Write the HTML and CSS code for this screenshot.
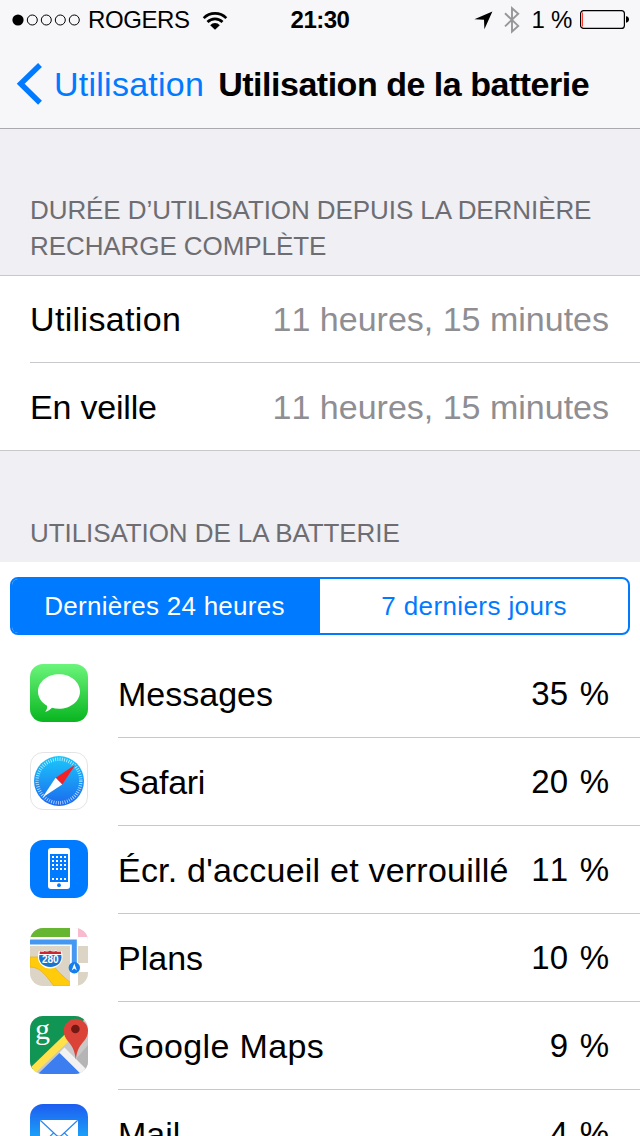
FILE: index.html
```
<!DOCTYPE html>
<html lang="fr">
<head>
    <meta charset="utf-8">
    <meta name="viewport" content="width=device-width, initial-scale=1">
    <title>Utilisation de la batterie</title>
    <link rel="stylesheet" href="styles.css">
</head>
<body>
    <header class="topbar">
        <div class="status-bar">
            <div class="status-left">
                <svg class="signal" width="68" height="12" viewBox="0 0 68 12">
                    <circle cx="6" cy="6" r="5.6"/>
                    <g fill="none" stroke="#000" stroke-width="1">
                        <circle cx="20.3" cy="6" r="5"/>
                        <circle cx="34.3" cy="6" r="5"/>
                        <circle cx="48.3" cy="6" r="5"/>
                        <circle cx="62.3" cy="6" r="5"/>
                    </g>
                </svg>
                <span class="carrier">ROGERS</span>
                <svg class="wifi" width="26" height="19" viewBox="0 0 26 19">
                    <g fill="none" stroke="#000" stroke-width="2.7">
                        <path d="M1.7 7.1a16 16 0 0 1 22.6 0"/>
                        <path d="M5.5 11a10.6 10.6 0 0 1 15 0"/>
                    </g>
                    <path d="M8.2 14.200a6.500 6.500 0 0 1 9.600 0L13 18.800z"/>
                </svg>
            </div>
            <span class="clock">21:30</span>
            <div class="status-right">
                <svg class="location" width="19" height="19" viewBox="0 0 19 19">
                    <path d="M18.4.4L10.4 18.2 10 8.8.4 8.3z"/>
                </svg>
                <svg class="bluetooth" width="16" height="28" viewBox="0 0 16 28">
                    <path d="M1 7.3l13.2 12.6L8 25.6V2.2l6.2 5.6L1 20.4" fill="none" stroke="#97979a" stroke-width="1.9"/>
                </svg>
                <span class="percent">1 %</span>
                <svg class="battery" width="50" height="20" viewBox="0 0 50 20">
                    <rect x=".6" y=".6" width="43.8" height="17.8" rx="3" fill="none" stroke="#000" stroke-width="1.2"/>
                    <path d="M2 2.5h1v14H2z" fill="#ff3b30"/>
                    <path d="M46 6.3c4 .4 4 6 0 6.4z"/>
                </svg>
            </div>
        </div>
        <nav class="nav">
            <svg class="chevron" width="26" height="42" viewBox="0 0 26 42">
                <path d="M24 2L4.700 20.800 24 39.700" fill="none" stroke="#007aff" stroke-width="5.5"/>
            </svg>
            <a class="back">Utilisation</a>
            <h1>Utilisation de la batterie</h1>
        </nav>
    </header>

    <main>
        <h2 class="group-title">DURÉE D’UTILISATION DEPUIS LA DERNIÈRE<br>RECHARGE COMPLÈTE</h2>
        <div class="group">
            <div class="stat">
                <span class="stat-name">Utilisation</span>
                <span class="value">11 heures, 15 minutes</span>
            </div>
            <div class="stat">
                <span class="stat-name standby">En veille</span>
                <span class="value">11 heures, 15 minutes</span>
            </div>
        </div>

        <h2 class="group-title battery-title">UTILISATION DE LA BATTERIE</h2>
        <div class="usage">
            <div class="segmented">
                <div class="segment active">Dernières 24 heures</div>
                <div class="segment">7 derniers jours</div>
            </div>

            <div class="app">
                <svg class="icon" viewBox="0 0 58 58">
                    <defs>
                        <linearGradient id="green" x1="0" y1="0" x2="0" y2="1">
                            <stop offset="0" stop-color="#6bf57b"/>
                            <stop offset="1" stop-color="#08b51f"/>
                        </linearGradient>
                    </defs>
                    <rect width="58" height="58" rx="13" fill="url(#green)"/>
                    <path d="M29 10.2c11.700 0 21 7.800 21 17.300S40.700 44.800 29 44.800c-2.500 0-4.900-.4-7.100-1-1.700 1.900-3.900 3.600-6.800 3.900 1.600-1.700 2.300-3.700 2-6C11.500 38.600 8 33.400 8 27.500 8 18 17.300 10.200 29 10.200z" fill="#fff"/>
                </svg>
                <div class="app-row">
                    <span class="app-name">Messages</span>
                    <span class="app-percent">35 %</span>
                </div>
            </div>

            <div class="app">
                <svg class="icon" viewBox="0 0 58 58">
                    <defs>
                        <linearGradient id="compass" x1="0" y1="0" x2="0" y2="1">
                            <stop offset="0" stop-color="#1bc8fb"/>
                            <stop offset="1" stop-color="#1c68ee"/>
                        </linearGradient>
                    </defs>
                    <rect x=".5" y=".5" width="57" height="57" rx="12.5" fill="#fff" stroke="#e4e4e4"/>
                    <circle cx="29" cy="29" r="25" fill="url(#compass)"/>
                    <circle cx="29" cy="29" r="21.8" fill="none" stroke="#fff" stroke-opacity=".75" stroke-width="3.4" stroke-dasharray=".8 1.483"/>
                    <path d="M45.5 12.5L25.600 25.800l6.600 6.600z" fill="#f52026"/>
                    <path d="M12.5 45.5l13.100-19.700 6.600 6.600z" fill="#fff"/>
                </svg>
                <div class="app-row">
                    <span class="app-name safari">Safari</span>
                    <span class="app-percent">20 %</span>
                </div>
            </div>

            <div class="app">
                <svg class="icon" viewBox="0 0 58 58">
                    <rect width="58" height="58" rx="13" fill="#007aff"/>
                    <rect x="18" y="8" width="22" height="41" rx="3" fill="#fff"/>
                    <rect x="20" y="14" width="18" height="28" fill="#007aff"/>
                    <path d="M22 17h14M22 21h14M22 25h14M22 29h14M22 39h14" stroke="#fff" stroke-width="2" stroke-dasharray="2"/>
                    <circle cx="29" cy="45.2" r="1.9" fill="#007aff"/>
                </svg>
                <div class="app-row">
                    <span class="app-name home">Écr. d'accueil et verrouillé</span>
                    <span class="app-percent">11 %</span>
                </div>
            </div>

            <div class="app">
                <svg class="icon" viewBox="0 0 58 58">
                    <defs>
                        <clipPath id="tile"><rect width="58" height="58" rx="13"/></clipPath>
                    </defs>
                    <g clip-path="url(#tile)">
                        <path d="M0 0h58v58H0z" fill="#dcd5c6"/>
                        <path d="M0 0h40v9H0z" fill="#66b631"/>
                        <path d="M48 0h10v9H48z" fill="#f9b9cf"/>
                        <path d="M0 9h58v9H0zM40 35h18v9H40z" fill="#fff"/>
                        <path d="M0 29h8c12 0 17 13 25 19 4 4 8 7 12 10H24C18 51 12 39 0 39z" fill="#ffcb0b" stroke="#eeb018" stroke-width=".8"/>
                        <path d="M40 0h8v58h-8z" fill="#fff"/>
                        <path d="M0 14h44.300v24" fill="none" stroke="#4598f2" stroke-width="5"/>
                        <circle cx="44.3" cy="39.7" r="5.7" fill="#157dec"/>
                        <path d="M44.3 35.5l2.600 7-2.600-2-2.600 2z" fill="#fff"/>
                        <path d="M9 23c2 1 4 .5 5.500-.7 2 1 4 1 5.500-.3 2 1.300 4 1.300 6 .2 1.500 1.300 3.500 1.800 5.500.8 1 2 1 4 1 6.500 0 6-6 11-12.500 11S8 35.500 8 29.500C8 27 8 25 9 23z" fill="#fff"/>
                        <path d="M10 23.5c2 .7 3.500.2 4.700-.6 2 1 3.800.8 5.300-.3 2 1.200 4 1 6 .3 1.500.8 3 1.300 4.700.6l.5 2.500H9.500z" fill="#ce2533"/>
                        <path d="M9.300 27h22c1.500 7-4 12-11 12s-12.500-5-11-12z" fill="#1973d1"/>
                    </g>
                    <text x="20.3" y="35.2" class="shield">280</text>
                </svg>
                <div class="app-row">
                    <span class="app-name">Plans</span>
                    <span class="app-percent">10 %</span>
                </div>
            </div>

            <div class="app">
                <svg class="icon" viewBox="0 0 58 58">
                    <g clip-path="url(#tile)">
                        <path d="M0 0h58v58H0z" fill="#c8c8c8"/>
                        <path d="M0 0h58L0 56z" fill="#109554"/>
                        <path d="M46 43L58 29v29z" fill="#b5b5b5"/>
                        <path d="M29.500 37L8 58h43z" fill="#3c7ef0"/>
                        <path d="M-2 59L48 11" stroke="#ffe14b" stroke-width="7.5"/>
                        <path d="M29.500 36.500l5-5L61 58H51z" fill="#f2f2f2"/>
                        <path d="M45.800 43.500c-1.300-10-4-14-8-18.500-2.500-3-4-6.500-4-10.500C33.800 8 39.200 2.800 45.800 2.800S58 8 58 14.500c0 4-1.500 7.500-4 10.500-4 4.500-7 8.500-8.200 18.500z" fill="#dc4338"/>
                        <circle cx="45.400" cy="13" r="4.300" fill="#741813"/>
                    </g>
                    <text x="5" y="23" class="google">g</text>
                </svg>
                <div class="app-row">
                    <span class="app-name gmaps">Google Maps</span>
                    <span class="app-percent">9 %</span>
                </div>
            </div>

            <div class="app">
                <svg class="icon" viewBox="0 0 58 58">
                    <defs>
                        <linearGradient id="sky" x1="0" y1="0" x2="0" y2="1">
                            <stop offset="0" stop-color="#1d5df0"/>
                            <stop offset="1" stop-color="#1ad4fd"/>
                        </linearGradient>
                    </defs>
                    <rect width="58" height="58" rx="13" fill="url(#sky)"/>
                    <rect x="10" y="16" width="38" height="26" rx="1.5" fill="#fff"/>
                    <path d="M10.5 16.5L26 31c2 2 4 2 6 0l15.500-14.500M10.500 41.500L23.500 29M47.500 41.500L34.500 29" fill="none" stroke="#2b87ee" stroke-width="1.2"/>
                </svg>
                <div class="app-row">
                    <span class="app-name">Mail</span>
                    <span class="app-percent">4 %</span>
                </div>
            </div>
        </div>
    </main>
</body>
</html>
```
FILE: styles.css
```
* {
    box-sizing: border-box;
}
body {
    margin: 0;
    height: 1136px;
    overflow: hidden;
    font-family: "Liberation Sans", Helvetica, Arial, sans-serif;
    background-color: #efeff4;
    color: #000;
}
h1, h2 {
    margin: 0;
    font-weight: normal;
}
svg {
    display: block;
    flex: none;
}
span, a, h1, h2 {
    white-space: nowrap;
}

/* Status bar and navigation */
.topbar {
    height: 129px;
    background-color: #f7f7f9;
    border-bottom: 1px solid #a9a9ae;
}
.status-bar {
    height: 40px;
    display: grid;
    grid-template-columns: 1fr auto 1fr;
    align-items: center;
    padding: 0 10px 0 12px;
    font-size: 24px;
}
.status-left, .status-right {
    display: flex;
    align-items: center;
}
.status-right {
    justify-content: flex-end;
}
.carrier {
    margin-left: 8px;
    letter-spacing: -0.4px;
}
.wifi {
    margin-left: 12px;
}
.clock {
    margin-left: -2px;
    font-weight: bold;
    letter-spacing: -0.5px;
}
.bluetooth {
    margin-left: 11px;
}
.percent {
    margin-left: 12px;
    letter-spacing: -0.3px;
}
.battery {
    margin-left: 8px;
}
.nav {
    height: 88px;
    display: flex;
    align-items: center;
    padding-left: 16px;
    font-size: 34px;
}
.back {
    margin-left: 12px;
    color: #007aff;
    letter-spacing: 0.25px;
}
.nav h1 {
    margin-left: 14px;
    font-size: 34px;
    font-weight: bold;
    letter-spacing: -0.48px;
}

/* Grouped list */
.group-title {
    height: 146px;
    padding: 63px 30px 0;
    font-size: 26px;
    line-height: 36px;
    letter-spacing: -0.08px;
    color: #6d6d72;
}
.battery-title {
    height: 111px;
    padding-top: 64px;
}
.group {
    background-color: #fff;
    border-top: 1px solid #c8c7cc;
    border-bottom: 1px solid #c8c7cc;
}
.stat {
    height: 87px;
    margin-left: 30px;
    padding-right: 31px;
    display: flex;
    align-items: center;
    justify-content: space-between;
    font-size: 34px;
}
.stat:first-child {
    border-bottom: 1px solid #c8c7cc;
}
.stat:last-child {
    padding-top: 2px;
}
.stat-name {
    letter-spacing: 0.35px;
}
.standby {
    letter-spacing: -0.2px;
}
.value {
    color: #8e8e93;
    font-kerning: none;
}

/* App list */
.usage {
    padding-top: 15px;
    background-color: #fff;
}
.segmented {
    height: 58px;
    margin: 0 10px 15px;
    display: flex;
    border: 2px solid #007aff;
    border-radius: 8px;
    overflow: hidden;
}
.segment {
    width: 50%;
    display: flex;
    align-items: center;
    justify-content: center;
    font-size: 26px;
    letter-spacing: 0.4px;
    color: #007aff;
}
.segment.active {
    padding-right: 3px;
    background-color: #007aff;
    color: #fff;
    letter-spacing: 0.25px;
}
.app {
    height: 88px;
    padding-left: 30px;
    display: flex;
}
.icon {
    width: 58px;
    height: 58px;
    margin-top: 14px;
}
.app-row {
    flex: 1;
    height: 88px;
    margin-left: 30px;
    padding-right: 31px;
    display: flex;
    align-items: center;
    justify-content: space-between;
    border-bottom: 1px solid #c8c7cc;
    font-size: 34px;
}
.app-name {
    padding-top: 2px;
}
.app-percent {
    font-size: 33px;
    font-kerning: none;
    word-spacing: 2.5px;
}
.safari {
    letter-spacing: -0.3px;
}
.home {
    letter-spacing: 0.22px;
}
.gmaps {
    letter-spacing: 0.35px;
}
.shield {
    font: bold 10px "Liberation Sans", sans-serif;
    fill: #fff;
    text-anchor: middle;
}
.google {
    font: 30px "Liberation Serif", serif;
    fill: #fff;
}
```
